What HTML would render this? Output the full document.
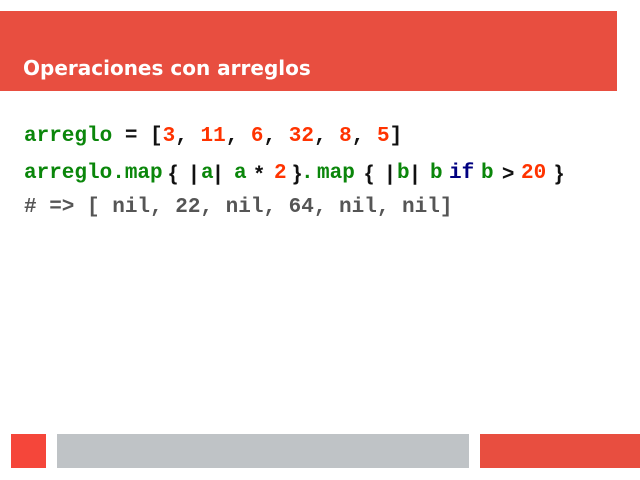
<!DOCTYPE html>
<html><head><style>
html,body{margin:0;padding:0;width:640px;height:480px;background:#fff;overflow:hidden;position:relative}
.hdr{position:absolute;left:0;top:11px;width:617px;height:80px;background:#e84e40}
.t{position:absolute;left:23px;top:56px;color:#fff;font:bold 20px "DejaVu Sans",sans-serif;white-space:nowrap}
.code{position:absolute;font:bold 21px "Liberation Mono",monospace;white-space:pre;color:#111}
.tk{position:absolute;top:162px;font:bold 21px "Liberation Mono",monospace;white-space:pre;color:#111}
.tk.s{font-family:"Liberation Sans",sans-serif;font-size:21px}
.g{color:#0a860a !important}.r{color:#ff3300 !important}.n{color:#000080 !important}.c{color:#555 !important}
.b{position:absolute;top:434px;height:34px}
</style></head><body>
<div class="hdr"></div>
<div class="t">Operaciones con arreglos</div>
<div class="code" style="left:24px;top:125px"><span class="g">arreglo</span> = [<span class="r">3</span>, <span class="r">11</span>, <span class="r">6</span>, <span class="r">32</span>, <span class="r">8</span>, <span class="r">5</span>]</div>
<div class="tk g" style="left:24px">arreglo.map</div>
<div class="tk s" style="left:169px">{</div>
<div class="tk s" style="left:191px">|</div>
<div class="tk g" style="left:201px">a</div>
<div class="tk s" style="left:215px">|</div>
<div class="tk g" style="left:234px">a</div>
<div class="tk s" style="left:255px">*</div>
<div class="tk r" style="left:274px">2</div>
<div class="tk s" style="left:293px">}</div>
<div class="tk g" style="left:301px">.</div>
<div class="tk g" style="left:317px">map</div>
<div class="tk s" style="left:365px">{</div>
<div class="tk s" style="left:387px">|</div>
<div class="tk g" style="left:397px">b</div>
<div class="tk s" style="left:412px">|</div>
<div class="tk g" style="left:430px">b</div>
<div class="tk n" style="left:449px">if</div>
<div class="tk g" style="left:481px">b</div>
<div class="tk s" style="left:502px">&gt;</div>
<div class="tk r" style="left:521px">20</div>
<div class="tk s" style="left:555px">}</div>
<div class="code c" style="left:24px;top:196px"># =&gt; [ nil, 22, nil, 64, nil, nil]</div>
<div class="b" style="left:11px;width:35px;background:#f5463a"></div>
<div class="b" style="left:57px;width:412px;background:#bfc3c6"></div>
<div class="b" style="left:480px;width:160px;background:#e84e40"></div>
</body></html>
